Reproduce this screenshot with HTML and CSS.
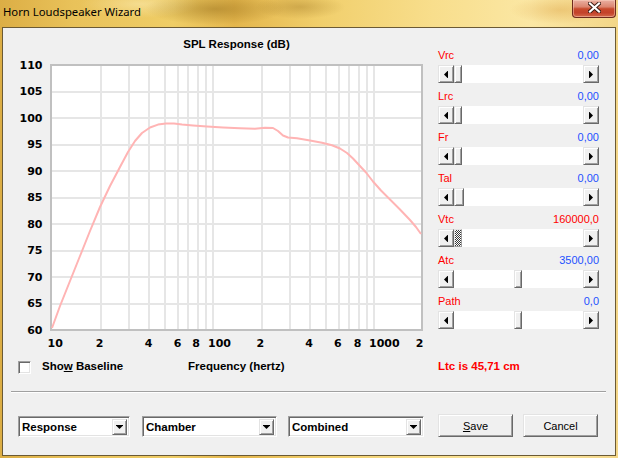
FILE: index.html
```html
<!DOCTYPE html>
<html>
<head>
<meta charset="utf-8">
<title>Horn Loudspeaker Wizard</title>
<link rel="stylesheet" href="styles.css">
</head>
<body>
<div class="window">
  <div class="titlebar">
    <span class="title">Horn Loudspeaker Wizard</span>
    <div class="close">
      <svg width="13" height="11" viewBox="0 0 13 11">
        <path d="M2 1.5L11 9.5M11 1.5L2 9.5" stroke="#3a1a12" stroke-width="4" stroke-linecap="square"/>
        <path d="M2 1.5L11 9.5M11 1.5L2 9.5" stroke="#fff" stroke-width="2.2" stroke-linecap="square"/>
      </svg>
    </div>
  </div>
  <div class="client">
    <div class="main">
      <div class="chart-panel">
        <div class="chart-title">SPL Response (dB)</div>
        <svg class="chart" width="427" height="301" viewBox="3 51 427 301">
          <rect x="51" y="65" width="371" height="265" fill="#fff"/>
          <path stroke="#e6e6e6" stroke-width="2" fill="none" d="M101 66V329M129 66V329M149 66V329M165 66V329M178 66V329M188 66V329M198 66V329M206 66V329M213 66V329M262 66V329M290 66V329M310 66V329M326 66V329M339 66V329M349 66V329M359 66V329M367 66V329M374 66V329M52 92H421M52 118H421M52 145H421M52 171H421M52 198H421M52 224H421M52 251H421M52 277H421M52 304H421"/>
          <rect x="51" y="65" width="371" height="265" fill="none" stroke="#c0c0c0" stroke-width="2"/>
          <polyline fill="none" stroke="#ffb4b4" stroke-width="2" stroke-linejoin="round" points="52,328 60,306 70,281 80,256 90,231 100,207 110,186 120,167 128,152 135,141 142,133 150,127.5 158,124.6 166,123.4 174,123.5 182,124.5 193,125.5 207,126.5 223,127.5 240,128.3 255,128.7 265,127.7 273,128 278,131 283,135.5 288,137.5 297,138.2 310,140.5 322,142.8 332,145.3 340,148.5 347,153 353,158.5 359,165 366,172.5 373,181.5 381,190.5 390,199.5 400,209.5 410,220 416,227 421,234"/>
          <g class="ylab" text-anchor="end">
            <text x="42.5" y="68.7">110</text>
            <text x="42.5" y="95.2">105</text>
            <text x="42.5" y="121.7">100</text>
            <text x="42.5" y="148.2">95</text>
            <text x="42.5" y="174.7">90</text>
            <text x="42.5" y="201.2">85</text>
            <text x="42.5" y="227.7">80</text>
            <text x="42.5" y="254.2">75</text>
            <text x="42.5" y="280.7">70</text>
            <text x="42.5" y="307.2">65</text>
            <text x="42.5" y="333.7">60</text>
          </g>
          <g class="xlab">
            <text x="47.5" y="346.7">10</text>
            <text x="99.5" y="346.7" text-anchor="middle">2</text>
            <text x="148.7" y="346.7" text-anchor="middle">4</text>
            <text x="177.5" y="346.7" text-anchor="middle">6</text>
            <text x="196.2" y="346.7" text-anchor="middle">8</text>
            <text x="208" y="346.7">100</text>
            <text x="260.3" y="346.7" text-anchor="middle">2</text>
            <text x="309" y="346.7" text-anchor="middle">4</text>
            <text x="337.8" y="346.7" text-anchor="middle">6</text>
            <text x="357.5" y="346.7" text-anchor="middle">8</text>
            <text x="369" y="346.7">1000</text>
            <text x="419.7" y="346.7" text-anchor="middle">2</text>
          </g>
        </svg>
        <div class="chart-foot">
          <span class="checkbox"></span>
          <span class="show-label">Sho<u>w</u> Baseline</span>
          <span class="freq-label">Frequency (hertz)</span>
        </div>
      </div>
      <div class="sliders">
        <div class="item">
          <div class="label-row"><span class="name">Vrc</span><span class="val">0,00</span></div>
          <div class="sb"><span class="sb-btn"><svg width="4" height="7" viewBox="0 0 4 7"><polygon points="4,-0.5 4,7.5 0,3.5" fill="#000"/></svg></span><span class="track"><span class="thumb"></span></span><span class="sb-btn"><svg width="4" height="7" viewBox="0 0 4 7"><polygon points="0,-0.5 0,7.5 4,3.5" fill="#000"/></svg></span></div>
        </div>
        <div class="item">
          <div class="label-row"><span class="name">Lrc</span><span class="val">0,00</span></div>
          <div class="sb"><span class="sb-btn"><svg width="4" height="7" viewBox="0 0 4 7"><polygon points="4,-0.5 4,7.5 0,3.5" fill="#000"/></svg></span><span class="track"><span class="thumb"></span></span><span class="sb-btn"><svg width="4" height="7" viewBox="0 0 4 7"><polygon points="0,-0.5 0,7.5 4,3.5" fill="#000"/></svg></span></div>
        </div>
        <div class="item">
          <div class="label-row"><span class="name">Fr</span><span class="val">0,00</span></div>
          <div class="sb"><span class="sb-btn"><svg width="4" height="7" viewBox="0 0 4 7"><polygon points="4,-0.5 4,7.5 0,3.5" fill="#000"/></svg></span><span class="track"><span class="thumb"></span></span><span class="sb-btn"><svg width="4" height="7" viewBox="0 0 4 7"><polygon points="0,-0.5 0,7.5 4,3.5" fill="#000"/></svg></span></div>
        </div>
        <div class="item">
          <div class="label-row"><span class="name">Tal</span><span class="val">0,00</span></div>
          <div class="sb"><span class="sb-btn"><svg width="4" height="7" viewBox="0 0 4 7"><polygon points="4,-0.5 4,7.5 0,3.5" fill="#000"/></svg></span><span class="track"><span class="thumb thumb-wide"></span></span><span class="sb-btn"><svg width="4" height="7" viewBox="0 0 4 7"><polygon points="0,-0.5 0,7.5 4,3.5" fill="#000"/></svg></span></div>
        </div>
        <div class="item">
          <div class="label-row"><span class="name">Vtc</span><span class="val val-red">160000,0</span></div>
          <div class="sb"><span class="sb-btn"><svg width="4" height="7" viewBox="0 0 4 7"><polygon points="4,-0.5 4,7.5 0,3.5" fill="#000"/></svg></span><span class="track"><span class="thumb thumb-focus"></span></span><span class="sb-btn"><svg width="4" height="7" viewBox="0 0 4 7"><polygon points="0,-0.5 0,7.5 4,3.5" fill="#000"/></svg></span></div>
        </div>
        <div class="item">
          <div class="label-row"><span class="name">Atc</span><span class="val">3500,00</span></div>
          <div class="sb"><span class="sb-btn"><svg width="4" height="7" viewBox="0 0 4 7"><polygon points="4,-0.5 4,7.5 0,3.5" fill="#000"/></svg></span><span class="track"><span class="thumb" style="margin-left:60px"></span></span><span class="sb-btn"><svg width="4" height="7" viewBox="0 0 4 7"><polygon points="0,-0.5 0,7.5 4,3.5" fill="#000"/></svg></span></div>
        </div>
        <div class="item">
          <div class="label-row"><span class="name">Path</span><span class="val">0,0</span></div>
          <div class="sb"><span class="sb-btn"><svg width="4" height="7" viewBox="0 0 4 7"><polygon points="4,-0.5 4,7.5 0,3.5" fill="#000"/></svg></span><span class="track"><span class="thumb" style="margin-left:60px"></span></span><span class="sb-btn"><svg width="4" height="7" viewBox="0 0 4 7"><polygon points="0,-0.5 0,7.5 4,3.5" fill="#000"/></svg></span></div>
        </div>
        <div class="ltc">Ltc is 45,71 cm</div>
      </div>
    </div>
    <div class="sep"></div>
    <div class="bottom-row">
      <div class="combo combo-1"><span class="combo-text">Response</span><span class="combo-btn"><svg width="7" height="4" viewBox="0 0 7 4"><polygon points="-0.5,0 7.5,0 3.5,4" fill="#000"/></svg></span></div>
      <div class="combo combo-2"><span class="combo-text">Chamber</span><span class="combo-btn"><svg width="7" height="4" viewBox="0 0 7 4"><polygon points="-0.5,0 7.5,0 3.5,4" fill="#000"/></svg></span></div>
      <div class="combo combo-3"><span class="combo-text">Combined</span><span class="combo-btn"><svg width="7" height="4" viewBox="0 0 7 4"><polygon points="-0.5,0 7.5,0 3.5,4" fill="#000"/></svg></span></div>
      <div class="btn btn-save"><u>S</u>ave</div>
      <div class="btn btn-cancel">Cancel</div>
    </div>
  </div>
</div>
</body>
</html>
```

FILE: styles.css
```css
html, body {
  margin: 0;
  padding: 0;
}
body {
  width: 618px;
  height: 458px;
  overflow: hidden;
  font-family: "Liberation Sans", Arial, sans-serif;
  background: #f0f0f0;
}
.window {
  width: 618px;
  height: 458px;
  box-sizing: border-box;
  padding: 0 2px 2px 2px;
  display: flex;
  flex-direction: column;
  background:
    radial-gradient(ellipse 70px 16px at 215px 9px, rgba(140, 100, 20, 0.45), rgba(140, 100, 20, 0) 100%),
    radial-gradient(ellipse 45px 12px at 300px 7px, rgba(150, 110, 30, 0.35), rgba(150, 110, 30, 0) 100%),
    radial-gradient(ellipse 60px 14px at 140px 4px, rgba(255, 244, 200, 0.45), rgba(255, 244, 200, 0) 100%),
    radial-gradient(ellipse 50px 14px at 560px 10px, rgba(215, 150, 50, 0.35), rgba(215, 150, 50, 0) 100%),
    linear-gradient(90deg, #dcae45 0%, #e9c25a 12%, #efcd66 28%, #e4b64c 38%, #f1cf6c 52%, #f8de8c 70%, #fbe7a4 86%, #f3d688 100%);
}
.titlebar {
  height: 27px;
  flex: none;
  display: flex;
  align-items: flex-start;
}
.title {
  font-family: "Noto Sans", "Open Sans", sans-serif;
  font-size: 11.3px;
  line-height: 16px;
  margin-top: 4px;
  margin-left: 1px;
  color: #000;
}
.close {
  margin-left: auto;
  width: 44px;
  height: 18px;
  box-sizing: border-box;
  border: 1px solid #6e2a1c;
  border-top: none;
  border-radius: 0 0 4px 4px;
  background: linear-gradient(#eab0a2 0%, #dc8670 40%, #c84a2c 52%, #c3422a 75%, #d46a4a 100%);
  box-shadow: inset 0 0 0 1px rgba(255, 220, 200, 0.45);
  display: flex;
  align-items: center;
  justify-content: center;
  padding-bottom: 2px;
}
.client {
  flex: 1;
  border: 1px solid #6b5a35;
  background: #f0f0f0;
  display: flex;
  flex-direction: column;
}
.main {
  height: 363px;
  flex: none;
  display: flex;
}
.chart-panel {
  width: 427px;
  display: flex;
  flex-direction: column;
}
.chart-title {
  padding-top: 9px;
  margin-left: 48px;
  width: 371px;
  height: 14px;
  line-height: 14px;
  text-align: center;
  font-weight: bold;
  font-size: 11.5px;
  color: #000;
}
.chart {
  display: block;
}
.ylab text, .xlab text {
  font-family: "DejaVu Sans", sans-serif;
  font-weight: bold;
  font-size: 11px;
  fill: #000;
}
.chart-foot {
  margin-top: 7px;
  height: 14px;
  display: flex;
  align-items: center;
  padding-left: 15px;
  font-weight: bold;
  font-size: 11.5px;
  line-height: 14px;
}
.checkbox {
  width: 13px;
  height: 13px;
  box-sizing: border-box;
  background: #fff;
  border: 1px solid;
  border-color: #a0a0a0 #fff #fff #a0a0a0;
  box-shadow: inset 1px 1px #696969, inset -1px -1px #e3e3e3;
  margin-top: 2px;
}
.show-label {
  margin-left: 11px;
  width: 146px;
}
.freq-label {
  margin-left: 0;
}
.sliders {
  margin-left: 8px;
  width: 161px;
  padding-top: 20px;
  display: flex;
  flex-direction: column;
  gap: 6px;
}
.item {
  display: flex;
  flex-direction: column;
  gap: 3px;
}
.label-row {
  display: flex;
  justify-content: space-between;
  height: 14px;
  line-height: 14px;
  font-size: 11px;
}
.name {
  color: #f00;
}
.val {
  color: #1e50ff;
}
.val-red {
  color: #f00;
}
.sb {
  display: flex;
  height: 18px;
  background: #fff;
}
.sb-btn {
  flex: none;
  width: 16px;
  height: 18px;
  box-sizing: border-box;
  background: #f0f0f0;
  border: 1px solid;
  border-color: #e3e3e3 #696969 #696969 #e3e3e3;
  box-shadow: inset 1px 1px #fff, inset -1px -1px #a0a0a0;
  display: flex;
  align-items: center;
  justify-content: center;
}
.sb-btn svg {
  display: block;
}
.track {
  flex: 1;
  display: flex;
}
.thumb {
  width: 8px;
  height: 18px;
  box-sizing: border-box;
  background: #f0f0f0;
  border: 1px solid;
  border-color: #e3e3e3 #696969 #696969 #e3e3e3;
  box-shadow: inset 1px 1px #fff, inset -1px -1px #a0a0a0;
}
.thumb-wide {
  width: 10px;
}
.thumb-focus {
  background-color: #fff;
  background-image: conic-gradient(#3a3a3a 25%, #fff 0 50%, #3a3a3a 0 75%, #fff 0);
  background-size: 2px 2px;
  box-shadow: none;
  border-color: #e3e3e3 #a0a0a0 #a0a0a0 #e3e3e3;
}
.ltc {
  margin-top: 24px;
  font-weight: bold;
  font-size: 11.5px;
  line-height: 14px;
  color: #f00;
}
.sep {
  margin: 0 9px 0 8px;
  height: 1px;
  background: #a0a0a0;
  border-bottom: 1px solid #fff;
}
.bottom-row {
  display: flex;
  align-items: flex-start;
  padding-top: 21px;
  padding-left: 15px;
}
.combo {
  margin-top: 2px;
  height: 21px;
  box-sizing: border-box;
  background: #fff;
  border: 1px solid;
  border-color: #a0a0a0 #fff #fff #a0a0a0;
  box-shadow: inset 1px 1px #696969, inset -1px -1px #e3e3e3;
  display: flex;
  align-items: center;
  justify-content: space-between;
  padding: 0 2px 0 3px;
  font-weight: bold;
  font-size: 11.5px;
}
.combo-1 { width: 112px; }
.combo-2 { width: 135px; margin-left: 12px; }
.combo-3 { width: 136px; margin-left: 11px; }
.combo-btn {
  width: 15px;
  height: 16px;
  box-sizing: border-box;
  background: #f0f0f0;
  border: 1px solid;
  border-color: #e3e3e3 #696969 #696969 #e3e3e3;
  box-shadow: inset 1px 1px #fff, inset -1px -1px #a0a0a0;
  display: flex;
  align-items: center;
  justify-content: center;
}
.combo-btn svg {
  display: block;
}
.btn {
  width: 75px;
  height: 23px;
  box-sizing: border-box;
  background: #f0f0f0;
  border: 1px solid;
  border-color: #e3e3e3 #696969 #696969 #e3e3e3;
  box-shadow: inset 1px 1px #fff, inset -1px -1px #a0a0a0;
  display: flex;
  align-items: center;
  justify-content: center;
  font-size: 11px;
  color: #000;
}
.btn-save { margin-left: 14px; }
.btn-cancel { margin-left: 10px; }
```
